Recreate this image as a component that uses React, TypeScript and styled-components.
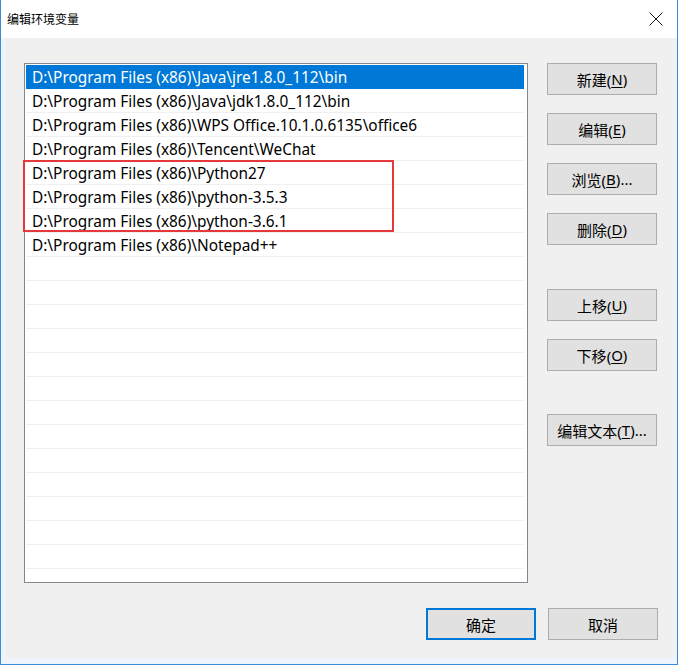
import React from 'react';
import styled, { createGlobalStyle } from 'styled-components';

const GlobalStyle = createGlobalStyle`
  html, body {
    margin: 0;
    padding: 0;
    background: #ffffff;
    overflow: hidden;
  }
  * {
    box-sizing: border-box;
  }
`;

const FONT = `"Noto Sans", "Noto Sans CJK SC", sans-serif`;

const paths = [
  'D:\\Program Files (x86)\\Java\\jre1.8.0_112\\bin',
  'D:\\Program Files (x86)\\Java\\jdk1.8.0_112\\bin',
  'D:\\Program Files (x86)\\WPS Office.10.1.0.6135\\office6',
  'D:\\Program Files (x86)\\Tencent\\WeChat',
  'D:\\Program Files (x86)\\Python27',
  'D:\\Program Files (x86)\\python-3.5.3',
  'D:\\Program Files (x86)\\python-3.6.1',
  'D:\\Program Files (x86)\\Notepad++',
];

const TOTAL_ROWS = 22;

interface SideBtn {
  label: string;
  key: string;
  suffix?: string;
  gap: number;
}

const sideButtons: SideBtn[] = [
  { label: '新建', key: 'N', gap: 0 },
  { label: '编辑', key: 'E', gap: 18 },
  { label: '浏览', key: 'B', suffix: '...', gap: 18 },
  { label: '删除', key: 'D', gap: 18 },
  { label: '上移', key: 'U', gap: 44 },
  { label: '下移', key: 'O', gap: 18 },
  { label: '编辑文本', key: 'T', suffix: '...', gap: 43 },
];

export default function App() {
  return (
    <>
      <GlobalStyle />
      <WindowS>
        <TitleBarS>
          <TitleS>编辑环境变量</TitleS>
          <CloseS>
            <svg width="14" height="14" viewBox="0 0 14 14">
              <path d="M0.5 0.5 L13.5 13.5 M13.5 0.5 L0.5 13.5" stroke="#111" strokeWidth="1" fill="none" />
            </svg>
          </CloseS>
        </TitleBarS>
        <BodyS>
          <MainS>
            <ListBoxS>
              <ListInnerS>
                {Array.from({ length: TOTAL_ROWS }).map((_, i) => (
                  <RowS key={i} selected={i === 0}>
                    {paths[i] ?? ''}
                  </RowS>
                ))}
              </ListInnerS>
              <HighlightS />
            </ListBoxS>
            <SideColumnS>
              {sideButtons.map((b) => (
                <ButtonS key={b.key} gap={b.gap}>
                  {b.label}(<u>{b.key}</u>){b.suffix}
                </ButtonS>
              ))}
            </SideColumnS>
          </MainS>
          <FooterS>
            <ButtonS gap={0} primary>
              确定
            </ButtonS>
            <ButtonS gap={0}>取消</ButtonS>
          </FooterS>
        </BodyS>
      </WindowS>
    </>
  );
}

const WindowS = styled.div`
  width: 678px;
  height: 665px;
  display: flex;
  flex-direction: column;
  border: 1px solid #3d8ad6;
  border-top: none;
  background: #f0f0f0;
  font-family: ${FONT};
`;

const TitleBarS = styled.div`
  height: 38px;
  background: #ffffff;
  display: flex;
  align-items: center;
  justify-content: space-between;
  padding: 0 14px 0 6px;
`;

const TitleS = styled.span`
  font-size: 12px;
  color: #000;
`;

const CloseS = styled.span`
  display: flex;
  align-items: center;
  width: 14px;
  height: 14px;
`;

const BodyS = styled.div`
  flex: 1;
  display: flex;
  flex-direction: column;
  padding: 25px 19px 0 18px;
  border-left: 5px solid #eef4fb;
  border-bottom: 6px solid #eef4fb;
`;

const MainS = styled.div`
  display: flex;
  gap: 19px;
`;

const ListBoxS = styled.div`
  position: relative;
  width: 504px;
  height: 520px;
  border: 1px solid #828790;
  background: #ffffff;
`;

const ListInnerS = styled.div`
  height: 100%;
  padding: 1px;
  overflow: hidden;
  border-right: 2px solid #ffffff;
`;

const RowS = styled.div<{ selected?: boolean }>`
  height: 24px;
  padding-top: 2px;
  line-height: 21px;
  padding-left: 6px;
  font-size: 15.4px;
  white-space: nowrap;
  color: ${({ selected }) => (selected ? '#ffffff' : '#000000')};
  background: ${({ selected }) => (selected ? '#0078d7' : '#ffffff')};
  border-bottom: 1px solid ${({ selected }) => (selected ? '#0078d7' : '#f0f0f0')};
`;

const HighlightS = styled.div`
  position: absolute;
  left: -2px;
  top: 96px;
  width: 371px;
  height: 72px;
  border: 2px solid #e5383b;
  pointer-events: none;
`;

const SideColumnS = styled.div`
  display: flex;
  flex-direction: column;
`;

const ButtonS = styled.div<{ gap: number; primary?: boolean }>`
  width: 110px;
  height: 32px;
  margin-top: ${({ gap }) => gap}px;
  display: flex;
  align-items: center;
  justify-content: center;
  background: #e1e1e1;
  border: ${({ primary }) => (primary ? '2px solid #0078d7' : '1px solid #adadad')};
  font-size: 15px;
  color: #000;
  white-space: nowrap;

  u {
    text-underline-offset: 2px;
  }
`;

const FooterS = styled.div`
  display: flex;
  justify-content: flex-end;
  gap: 12px;
  margin-top: 25px;
`;
